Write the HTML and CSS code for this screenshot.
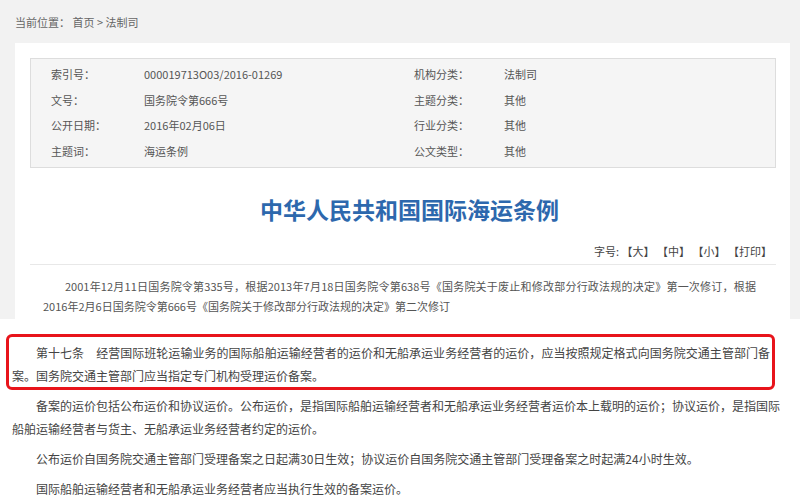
FILE: index.html
```html
<!DOCTYPE html>
<html lang="zh-CN">
<head>
    <meta charset="UTF-8">
    <title>中华人民共和国国际海运条例</title>
    <link rel="stylesheet" href="styles.css">
</head>
<body>

    <div class="top">
        <div class="crumb">当前位置： 首页 &gt; 法制司</div>

        <div class="panel">
            <div class="info">
                <div class="info-row">
                    <span class="k">索引号：</span><span class="v">000019713O03/2016-01269</span>
                    <span class="k2">机构分类：</span><span class="v">法制司</span>
                </div>
                <div class="info-row">
                    <span class="k">文号：</span><span class="v">国务院令第666号</span>
                    <span class="k2">主题分类：</span><span class="v">其他</span>
                </div>
                <div class="info-row">
                    <span class="k">公开日期：</span><span class="v">2016年02月06日</span>
                    <span class="k2">行业分类：</span><span class="v">其他</span>
                </div>
                <div class="info-row">
                    <span class="k">主题词：</span><span class="v">海运条例</span>
                    <span class="k2">公文类型：</span><span class="v">其他</span>
                </div>
            </div>

            <h1 class="title">中华人民共和国国际海运条例</h1>

            <div class="tools">字号: 【大】 【中】 【小】 【打印】</div>

            <p class="note">2001年12月11日国务院令第335号，根据2013年7月18日国务院令第638号《国务院关于废止和修改部分行政法规的决定》第一次修订，根据2016年2月6日国务院令第666号《国务院关于修改部分行政法规的决定》第二次修订</p>
        </div>
    </div>

    <div class="article">
        <div class="mark">
            <p>第十七条　经营国际班轮运输业务的国际船舶运输经营者的运价和无船承运业务经营者的运价，应当按照规定格式向国务院交通主管部门备案。国务院交通主管部门应当指定专门机构受理运价备案。</p>
        </div>
        <p>备案的运价包括公布运价和协议运价。公布运价，是指国际船舶运输经营者和无船承运业务经营者运价本上载明的运价；协议运价，是指国际船舶运输经营者与货主、无船承运业务经营者约定的运价。</p>
        <p>公布运价自国务院交通主管部门受理备案之日起满30日生效；协议运价自国务院交通主管部门受理备案之时起满24小时生效。</p>
        <p>国际船舶运输经营者和无船承运业务经营者应当执行生效的备案运价。</p>
    </div>

</body>
</html>
```

FILE: styles.css
```css
body {
    margin: 0;
    padding: 0;
    background-color: #fff;
    font-family: "Noto Sans CJK SC", "Noto Sans", sans-serif;
    color: #555;
}

.top {
    background-color: #f2f2f2;
    padding: 14px 10px 0 15px;
}

.crumb {
    font-size: 11px;
    line-height: 16px;
    color: #666;
    margin-bottom: 13px;
}

.panel {
    background-color: #fff;
    padding: 15px 14px 3px 15px;
}

.info {
    background-color: #f5f5f5;
    border: 1px solid #ddd;
    padding: 3px 0;
}

.info-row {
    display: flex;
    font-size: 11px;
    line-height: 25.5px;
    color: #555;
}

.info-row .k {
    width: 93px;
    padding-left: 20px;
    flex-shrink: 0;
}

.info-row .v {
    width: 270px;
    flex-shrink: 0;
}

.info-row .k2 {
    width: 90px;
    flex-shrink: 0;
}

.title {
    margin: 26px 0 0;
    text-align: center;
    font-size: 23px;
    line-height: 30px;
    color: #2d68ad;
    font-weight: bold;
    padding-left: 13px;
}

.tools {
    margin-top: 19px;
    text-align: right;
    font-size: 11px;
    line-height: 16px;
    color: #444;
    padding-right: 4px;
    padding-bottom: 5px;
    border-bottom: 1px solid #e8e8e8;
}

.note {
    margin: 11px 20px 0 13px;
    font-size: 11px;
    line-height: 20px;
    text-indent: 22px;
    text-align: justify;
    color: #555;
}

.article {
    padding: 15px 20px 0 12px;
    font-size: 12px;
    line-height: 23px;
    color: #444;
}

.article p {
    margin: 0 0 7px;
    text-indent: 24px;
    text-align: justify;
}

.mark {
    border: 3px solid #e8141b;
    border-radius: 6px;
    margin: 0 5px 4px -6px;
    padding: 4px 2px 0 3px;
}

.mark p {
    margin: 0;
}
```
